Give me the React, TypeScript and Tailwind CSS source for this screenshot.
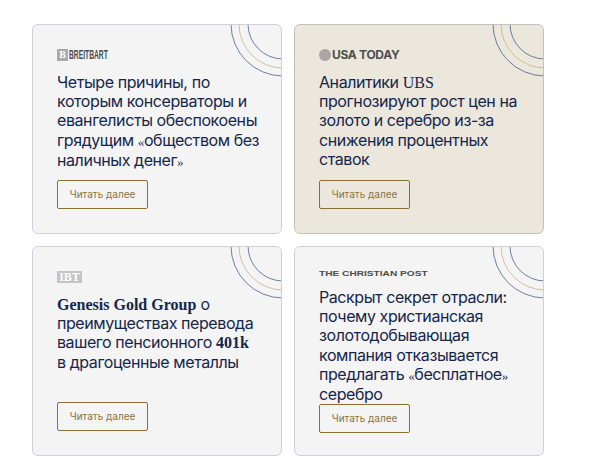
import React from 'react';

const sans = "font-['Inter','Liberation_Sans',sans-serif]";

const Rings: React.FC = () => (
  <svg className="absolute right-0 top-0" width="60" height="60" viewBox="0 0 60 60" fill="none">
    <circle cx="62" cy="-1" r="52" stroke="#4f5f85" strokeWidth="0.8" />
    <circle cx="62" cy="-1" r="44" stroke="#c6b286" strokeWidth="0.8" />
    <circle cx="62" cy="-1" r="35" stroke="#4f5f85" strokeWidth="0.8" />
  </svg>
);

const Serif: React.FC<{ children: React.ReactNode; bold?: boolean }> = ({ children, bold }) => (
  <span className={`font-['Liberation_Serif',serif] tracking-normal ${bold ? 'font-bold' : 'font-normal'}`}>{children}</span>
);

const Quote: React.FC<{ children: React.ReactNode }> = ({ children }) => (
  <span className="font-['Liberation_Serif',serif] text-[13px]">{children}</span>
);

const articles: { id: string; beige?: boolean; logo: React.ReactNode; title: React.ReactNode }[] = [
  {
    id: 'breitbart',
    logo: (
      <div className="mb-3 flex h-3 items-center gap-px">
        <span className="flex h-3 w-[11px] items-center justify-center bg-[#a9a9a9] font-['Liberation_Serif',serif] text-[10px] font-bold leading-none text-white">B</span>
        <span className="origin-left scale-x-[0.56] whitespace-nowrap font-['Liberation_Sans',sans-serif] text-[12px] font-bold leading-none text-[#4a4a4a]">BREITBART</span>
      </div>
    ),
    title: <>Четыре причины, по которым консерваторы и евангелисты обеспокоены грядущим <Quote>«</Quote>обществом без наличных денег<Quote>»</Quote></>,
  },
  {
    id: 'usatoday',
    beige: true,
    logo: (
      <div className="mb-3 flex h-3 items-center gap-px">
        <span className="h-3 w-3 rounded-full bg-[#a8a6a3]" />
        <span className="font-['Inter',sans-serif] text-[12px] font-bold leading-none tracking-[-0.3px] text-[#4f4e4c]">USA TODAY</span>
      </div>
    ),
    title: <>Аналитики <Serif>UBS</Serif> прогнозируют рост цен на золото и серебро из-за снижения процентных ставок</>,
  },
  {
    id: 'ibt',
    logo: (
      <div className="mb-3 flex h-3 items-center">
        <span className="flex h-3 w-[25px] items-center justify-center bg-[#c4c4c4] font-['Liberation_Serif',serif] text-[12px] font-bold leading-none text-white">IBT</span>
      </div>
    ),
    title: <><Serif bold>Genesis Gold Group</Serif> о преимуществах перевода вашего пенсионного <Serif bold>401k</Serif> в драгоценные металлы</>,
  },
  {
    id: 'christianpost',
    logo: (
      <div className="mb-3 flex h-[5px] items-center">
        <span className="origin-left scale-x-[1.35] whitespace-nowrap font-['Liberation_Sans',sans-serif] text-[7.5px] font-bold leading-none text-[#4a4a4a]">THE CHRISTIAN POST</span>
      </div>
    ),
    title: <>Раскрыт секрет отрасли: почему христианская золотодобывающая компания отказывается предлагать <Quote>«</Quote>бесплатное<Quote>»</Quote> серебро</>,
  },
];

export default function App() {
  return (
    <div className={`min-h-screen bg-white pl-8 pt-6 ${sans}`}>
      <div className="grid w-[512px] grid-cols-2 gap-3">
        {articles.map(a => (
          <div
            key={a.id}
            className={`relative flex h-[210px] flex-col overflow-hidden rounded-md border p-6 ${a.beige ? 'border-[#c5c2b9] bg-[#ebe7dd]' : 'border-[#d0d1d6] bg-[#f4f4f5]'}`}
          >
            <Rings />
            {a.logo}
            <h3 className="relative -mr-1 text-[16px] font-normal leading-[19.2px] tracking-[-0.42px] text-[#15264a]">{a.title}</h3>
            <a className="mt-auto flex h-[29px] w-[91px] shrink-0 items-center justify-center rounded-[2px] border border-[#8b6f32] text-[10px] text-[#8b7340]">
              Читать далее
            </a>
          </div>
        ))}
      </div>
    </div>
  );
}
